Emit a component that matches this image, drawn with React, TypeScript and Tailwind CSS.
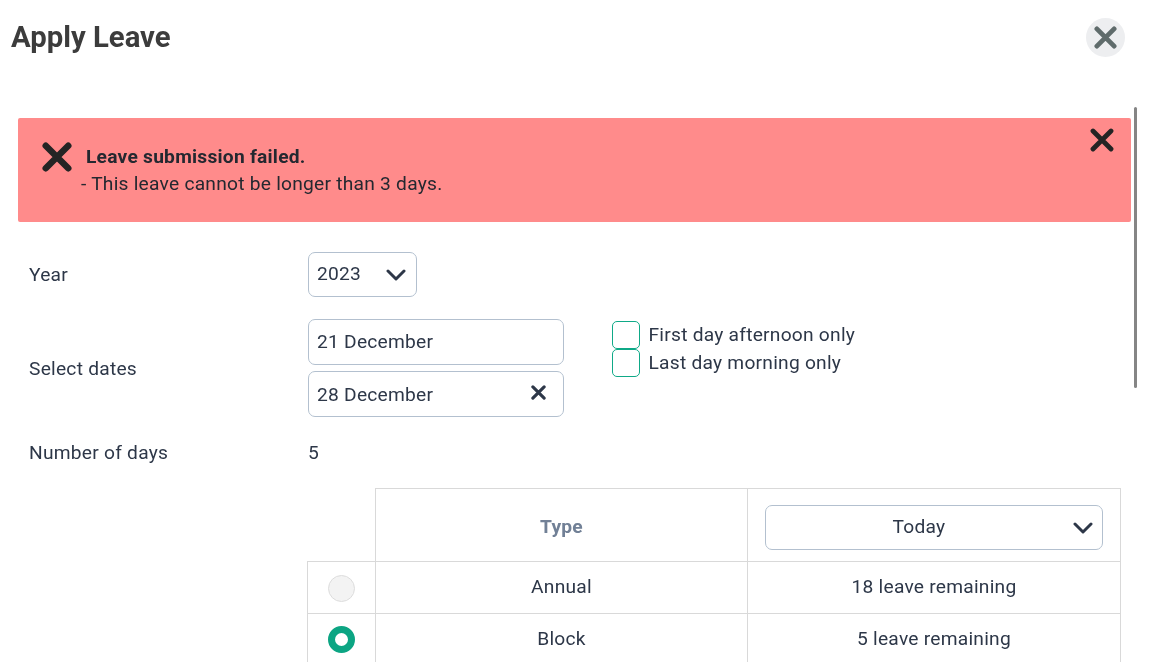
import React from "react";

const XIcon = ({ className, sw = 3 }: { className: string; sw?: number }) => (
  <svg viewBox="0 0 24 24" className={className} fill="none" stroke="currentColor" strokeWidth={sw} strokeLinecap="round">
    <path d="M3 3 21 21M21 3 3 21" />
  </svg>
);

const Chevron = ({ className }: { className: string }) => (
  <svg viewBox="0 0 20 12" className={className} fill="none" stroke="currentColor" strokeWidth="3" strokeLinecap="round" strokeLinejoin="round">
    <path d="M2 2l8 8 8-8" />
  </svg>
);

const cell = "border border-[#d9d9d9] text-center font-normal p-0";

export default function App() {
  return (
    <div className="relative h-[667px] w-[1153px] overflow-hidden text-[#2d3748] font-['Roboto',sans-serif] text-[19.2px] leading-[28px] tracking-[0.24px] [will-change:transform]">
      <header className="flex h-[107px] items-start justify-between pl-[11px] pr-[28px] pt-[18px]">
        <h1 className="text-[29.3px] font-bold leading-[38px] tracking-normal text-[#3c3c3c]">Apply Leave</h1>
        <button className="flex h-[39px] w-[39px] items-center justify-center rounded-full bg-[#edeef0] text-[#5f6b6b]">
          <XIcon className="h-[23px] w-[23px]" sw={5} />
        </button>
      </header>

      <main className="h-[555px] overflow-hidden pl-[18px] pr-[22px] pt-[11px]">
        <section className="relative h-[104px] rounded-[2px] bg-[#ff8b8b] pl-[24px] pt-[24px] text-[#242830]">
          <div className="flex items-center">
            <XIcon className="h-[30px] w-[30px] shrink-0 text-[#242424]" sw={5.2} />
            <strong className="ml-[14px] leading-[30px] font-bold">Leave submission failed.</strong>
          </div>
          <p className="ml-[39px] leading-[24px]">- This leave cannot be longer than 3 days.</p>
          <button className="absolute right-[17px] top-[10px] text-[#242424]">
            <XIcon className="h-[24px] w-[24px]" sw={4.8} />
          </button>
        </section>

        <div className="mt-[30px] flex items-center pl-[11px]">
          <label className="w-[279px]">Year</label>
          <div className="flex h-[45px] w-[109px] items-center justify-between rounded-[7px] border border-[#b3c0cf] pl-[8px] pr-[10px]">
            <span className="-mt-[2px]">2023</span>
            <Chevron className="h-[12px] w-[20px]" />
          </div>
        </div>

        <div className="mt-[22px] flex items-center pl-[11px]">
          <label className="w-[279px] pt-[2px]">Select dates</label>
          <div className="flex w-[256px] flex-col gap-[6px]">
            <div className="flex h-[46px] items-center rounded-[7px] border border-[#b3c0cf] pl-[8px]">21 December</div>
            <div className="flex h-[46px] items-center justify-between rounded-[7px] border border-[#b3c0cf] pl-[8px] pr-[17px]">
              <span className="pt-[2px]">28 December</span>
              <XIcon className="-mt-[4px] h-[15px] w-[15px]" sw={5} />
            </div>
          </div>
          <div className="mb-[39px] ml-[48px] flex flex-col">
            <label className="flex h-[29px] items-center gap-[9px]">
              <span className="h-[28px] w-[27.5px] rounded-[5px] border border-[#0fa987]" />
              First day afternoon only
            </label>
            <label className="flex h-[28px] items-center gap-[9px]">
              <span className="h-[27.5px] w-[27.5px] rounded-[5px] border border-[#0fa987]" />
              Last day morning only
            </label>
          </div>
        </div>

        <div className="mt-[22px] flex items-center pl-[11px]">
          <label className="w-[279px]">Number of days</label>
          <span>5</span>
        </div>

        <table className="ml-[289px] mt-[21px] w-[814px] table-fixed border-collapse">
          <thead>
            <tr className="h-[73px]">
              <th className="w-[68px] border-b border-[#d9d9d9]" />
              <th className={`${cell} w-[372px] !font-bold text-[#718096] pt-[4px]`}>Type</th>
              <th className={cell}>
                <div className="relative mx-auto mt-[4px] flex h-[45px] w-[338px] items-center justify-center rounded-[7px] border border-[#b3c0cf] font-normal text-[#2d3748]">
                  <span className="pr-[30px]">Today</span>
                  <Chevron className="absolute right-[9px] top-[16px] h-[12px] w-[20px]" />
                </div>
              </th>
            </tr>
          </thead>
          <tbody>
            <tr className="h-[52px]">
              <td className={`${cell} pt-[1px]`}>
                <span className="mx-auto block h-[27px] w-[27px] rounded-full border border-[#dcdcdc] bg-[#f3f3f3]" />
              </td>
              <td className={`${cell} pb-[2px]`}>Annual</td>
              <td className={`${cell} pb-[2px]`}>18 leave remaining</td>
            </tr>
            <tr className="h-[52px]">
              <td className={cell}>
                <span className="mx-auto block h-[27px] w-[27px] rounded-full border-[7px] border-[#0ca583] bg-white" />
              </td>
              <td className={`${cell} pb-[2px]`}>Block</td>
              <td className={`${cell} pb-[2px]`}>5 leave remaining</td>
            </tr>
          </tbody>
        </table>
      </main>

      <div className="absolute left-[1134px] top-[107px] h-[281px] w-[3px] rounded-full bg-[#858585]" />
    </div>
  );
}
